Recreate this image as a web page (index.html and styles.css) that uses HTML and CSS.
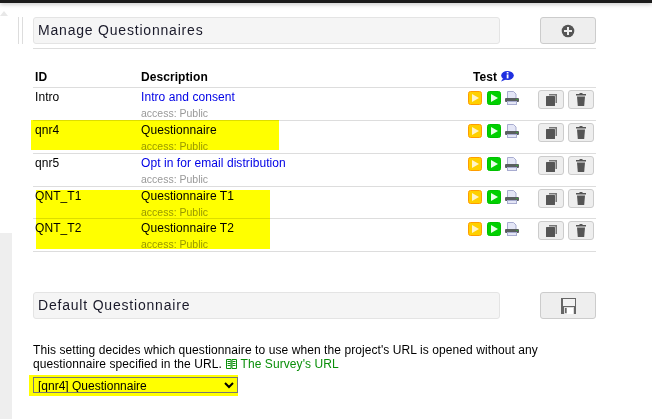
FILE: index.html
```html
<!DOCTYPE html>
<html lang="en">
<head>
<meta charset="utf-8">
<title>Manage Questionnaires</title>
<link rel="stylesheet" href="styles.css">
</head>
<body>
<div class="topbar"></div>
<div class="page">
  <aside class="side">
    <div class="side-top">
      <div class="tri"></div>
      <div class="split"></div>
    </div>
    <div class="side-panel"></div>
  </aside>
  <main class="main">
    <section class="head">
      <h2 class="title">Manage Questionnaires</h2>
      <button class="btn big" type="button" aria-label="Add">
        <svg width="14" height="14" viewBox="0 0 14 14"><circle cx="7" cy="7" r="6.3" fill="#555"/><path d="M7 3v8M3 7h8" stroke="#eee" stroke-width="2"/></svg>
      </button>
    </section>
    <hr class="rule">
    <div class="table-wrap">
      <table class="qt">
        <thead>
          <tr><th class="c-id">ID</th><th class="c-desc">Description</th>
            <th class="c-test">Test <svg class="info" width="14" height="11" viewBox="0 0 14 11"><ellipse cx="7.5" cy="4.5" rx="6.3" ry="4.5" fill="#1f2fe0"/><path d="M3 7.5L1 10.5 6 8.5z" fill="#1f2fe0"/><rect x="6.7" y="1" width="1.8" height="1.5" fill="#fff"/><rect x="6.7" y="3.4" width="1.8" height="4" fill="#fff"/></svg></th>
            <th class="c-act"></th></tr>
        </thead>
        <tbody>
          <tr><td>Intro</td><td><a class="lnk" href="#">Intro and consent</a><div class="acc">access: Public</div></td>
            <td class="icons"><svg class="i" width="14" height="14"><use href="#play-o"/></svg><svg class="i" width="14" height="14"><use href="#play-g"/></svg><svg class="i" width="14" height="14"><use href="#printer"/></svg></td>
            <td class="acts"><button class="btn sm" type="button" aria-label="Copy"><svg width="11" height="12"><use href="#copy"/></svg></button><button class="btn sm" type="button" aria-label="Delete"><svg width="10" height="13"><use href="#trash"/></svg></button></td></tr>
          <tr><td>qnr4</td><td>Questionnaire<div class="acc">access: Public</div></td>
            <td class="icons"><svg class="i" width="14" height="14"><use href="#play-o"/></svg><svg class="i" width="14" height="14"><use href="#play-g"/></svg><svg class="i" width="14" height="14"><use href="#printer"/></svg></td>
            <td class="acts"><button class="btn sm" type="button" aria-label="Copy"><svg width="11" height="12"><use href="#copy"/></svg></button><button class="btn sm" type="button" aria-label="Delete"><svg width="10" height="13"><use href="#trash"/></svg></button></td></tr>
          <tr><td>qnr5</td><td><a class="lnk" href="#">Opt in for email distribution</a><div class="acc">access: Public</div></td>
            <td class="icons"><svg class="i" width="14" height="14"><use href="#play-o"/></svg><svg class="i" width="14" height="14"><use href="#play-g"/></svg><svg class="i" width="14" height="14"><use href="#printer"/></svg></td>
            <td class="acts"><button class="btn sm" type="button" aria-label="Copy"><svg width="11" height="12"><use href="#copy"/></svg></button><button class="btn sm" type="button" aria-label="Delete"><svg width="10" height="13"><use href="#trash"/></svg></button></td></tr>
          <tr class="short"><td>QNT_T1</td><td>Questionnaire T1<div class="acc">access: Public</div></td>
            <td class="icons"><svg class="i" width="14" height="14"><use href="#play-o"/></svg><svg class="i" width="14" height="14"><use href="#play-g"/></svg><svg class="i" width="14" height="14"><use href="#printer"/></svg></td>
            <td class="acts"><button class="btn sm" type="button" aria-label="Copy"><svg width="11" height="12"><use href="#copy"/></svg></button><button class="btn sm" type="button" aria-label="Delete"><svg width="10" height="13"><use href="#trash"/></svg></button></td></tr>
          <tr><td>QNT_T2</td><td>Questionnaire T2<div class="acc">access: Public</div></td>
            <td class="icons"><svg class="i" width="14" height="14"><use href="#play-o"/></svg><svg class="i" width="14" height="14"><use href="#play-g"/></svg><svg class="i" width="14" height="14"><use href="#printer"/></svg></td>
            <td class="acts"><button class="btn sm" type="button" aria-label="Copy"><svg width="11" height="12"><use href="#copy"/></svg></button><button class="btn sm" type="button" aria-label="Delete"><svg width="10" height="13"><use href="#trash"/></svg></button></td></tr>
        </tbody>
      </table>
      <div class="mark mark-a"></div>
      <div class="mark mark-b"></div>
    </div>
    <section class="head default">
      <h2 class="title">Default Questionnaire</h2>
      <button class="btn big" type="button" aria-label="Save">
        <svg width="15" height="16" viewBox="0 0 15 16"><path d="M0 0h15v16H0z" fill="#666"/><rect x="2" y="1" width="12" height="7" fill="#f2f2f2"/><rect x="3" y="9" width="10" height="7" fill="#ddd"/><rect x="6" y="10" width="6" height="6" fill="#fff"/><rect x="4" y="10" width="1.6" height="5" fill="#666"/></svg>
      </button>
    </section>
    <p class="note">This setting decides which questionnaire to use when the project's URL is opened without any questionnaire specified in the URL. <svg class="book" width="11" height="11" viewBox="0 0 11 11"><path d="M.5 1.500h4.500v9H.5zM6 1.500h4.500v9H6zM1.500 3.500h3M1.500 5.500h3M1.500 7.500h3M6.500 3.500h3M6.500 5.500h3M6.500 7.500h3" fill="none" stroke="#0a8f0a" stroke-width="1"/></svg> <a class="green" href="#">The Survey's URL</a></p>
    <div class="sel-wrap">
      <select class="sel"><option>[qnr4] Questionnaire</option></select>
    </div>
  </main>
</div>
<svg class="defs" width="0" height="0">
  <defs>
    <symbol id="play-o" viewBox="0 0 14 14"><rect x=".5" y=".5" width="13" height="13" rx="2" fill="#ffd000" stroke="#ff9d00"/><path d="M4 3l7 4-7 4z" fill="#fff4c8"/></symbol>
    <symbol id="play-g" viewBox="0 0 14 14"><rect x=".5" y=".5" width="13" height="13" rx="2" fill="#00d000" stroke="#00c000"/><path d="M4 3l7 4-7 4z" fill="#e6ffe6"/></symbol>
    <symbol id="printer" viewBox="0 0 14 14"><path d="M2.500.500h6l2.500 2.500v5H2.500z" fill="#e4e6f6" stroke="#a8acd0"/><rect x="0" y="7" width="14" height="4" rx="1" fill="#5a5f60"/><rect x="11" y="8" width="2" height="1" fill="#3c9a3c"/><rect x="2.500" y="10.500" width="9" height="3" fill="#e4e6f6" stroke="#a8acd0"/></symbol>
    <symbol id="copy" viewBox="0 0 11 12"><path d="M3 0h8v9H9.500V1.500H3z" fill="#777"/><rect x="0" y="2" width="9" height="10" rx=".5" fill="#555"/></symbol>
    <symbol id="trash" viewBox="0 0 10 13"><path d="M3.500 0h3v1h3.500v1.500H0V1h3.500z" fill="#555"/><path d="M1 3.500h8l-.8 9.500H1.800z" fill="#555"/></symbol>
  </defs>
</svg>
</body>
</html>
```
FILE: styles.css
```css
* { box-sizing: border-box; }
html, body { margin: 0; padding: 0; height: 419px; overflow: hidden; }
body { background: #fff; font-family: "Liberation Sans", Arial, sans-serif; font-size: 12px; color: #000; }
.topbar { height: 3px; background: #1c1c1c; box-shadow: 0 1px 4px rgba(0,0,0,.3); }
.page { display: flex; height: 416px; }
.side { width: 33px; flex: none; display: flex; flex-direction: column; }
.side-top { height: 230px; position: relative; }
.tri { position: absolute; left: 0; top: 8px; width: 0; height: 0; border: 4px solid transparent; border-top: 0; border-bottom: 5px solid #e8e8e8; }
.split { position: absolute; left: 18px; top: 14px; width: 5px; height: 27px; border-left: 1px solid #ddd; border-right: 1px solid #ddd; }
.side-panel { width: 12px; flex: 1; background: #eee; }
.main { width: 563px; padding-top: 14px; }
.head { display: flex; justify-content: space-between; }
.title { margin: 0; width: 467px; height: 27px; background: #f5f5f5; border: 1px solid #e4e4e4; border-radius: 3px; padding: 0 4px; font-size: 14px; font-weight: 400; line-height: 24px; letter-spacing: .8px; color: #1a1a2a; }
.btn { display: inline-flex; align-items: center; justify-content: center; padding: 0; background: #eee; border: 1px solid #ccc; border-radius: 3px; }
.btn.big { width: 56px; height: 27px; }
.btn.sm { width: 26px; height: 19px; margin-right: 4px; }
.rule { margin: 4px 0 0; border: 0; border-top: 1px solid #ddd; }
.table-wrap { position: relative; height: 203px; margin-top: 17px; }
.qt { width: 563px; border-collapse: collapse; table-layout: fixed; letter-spacing: .07px; }
.qt th { height: 21px; padding: 0 3px 3px; text-align: left; font-weight: 700; font-size: 12px; vertical-align: bottom; border-bottom: 1px solid #ddd; }
.qt th.c-id, .qt td:first-child { padding-left: 2px; }
.c-id { width: 105px; }
.c-desc { width: 330px; }
.c-test { width: 70px; }
.qt td { height: 33px; padding: 2px 3px 0; vertical-align: top; border-bottom: 1px solid #ddd; line-height: 14px; }
.qt tr.short td { height: 32px; }
.qt th.c-test { padding-left: 5px; }
.info { vertical-align: -1px; }
.lnk { color: #0000e6; text-decoration: none; }
.acc { font-size: 10.500px; color: #999; line-height: 12px; margin-top: 3px; letter-spacing: 0; }
.qt td.icons { padding: 3px 0 0; font-size: 0; white-space: nowrap; }
.i { margin-right: 5px; }
.i + .i { margin-right: 4px; }
.qt td.acts { padding: 2px 0 0; white-space: nowrap; font-size: 0; }
.mark { position: absolute; background: #ff0; mix-blend-mode: multiply; }
.mark-a { left: -2px; top: 54px; width: 248px; height: 30px; }
.mark-b { left: 3px; top: 124px; width: 234px; height: 59px; }
.default { margin-top: 23px; }
.note { margin: 24px 0 0; line-height: 14px; width: 540px; letter-spacing: .08px; }
.book { vertical-align: -1px; margin-left: 1px; }
.green { color: #0a8f0a; text-decoration: none; }
.sel-wrap { margin: 4px 0 0 -4px; width: 209px; height: 21px; background: #ff0; padding: 2px 0 0 4px; }
.sel { display: block; width: 205px; height: 16px; padding: 0; font: 12px "Liberation Sans", Arial, sans-serif; background: #ff0; color: #000; border: 1px solid #777; border-radius: 0; }
.defs { position: absolute; }
```
